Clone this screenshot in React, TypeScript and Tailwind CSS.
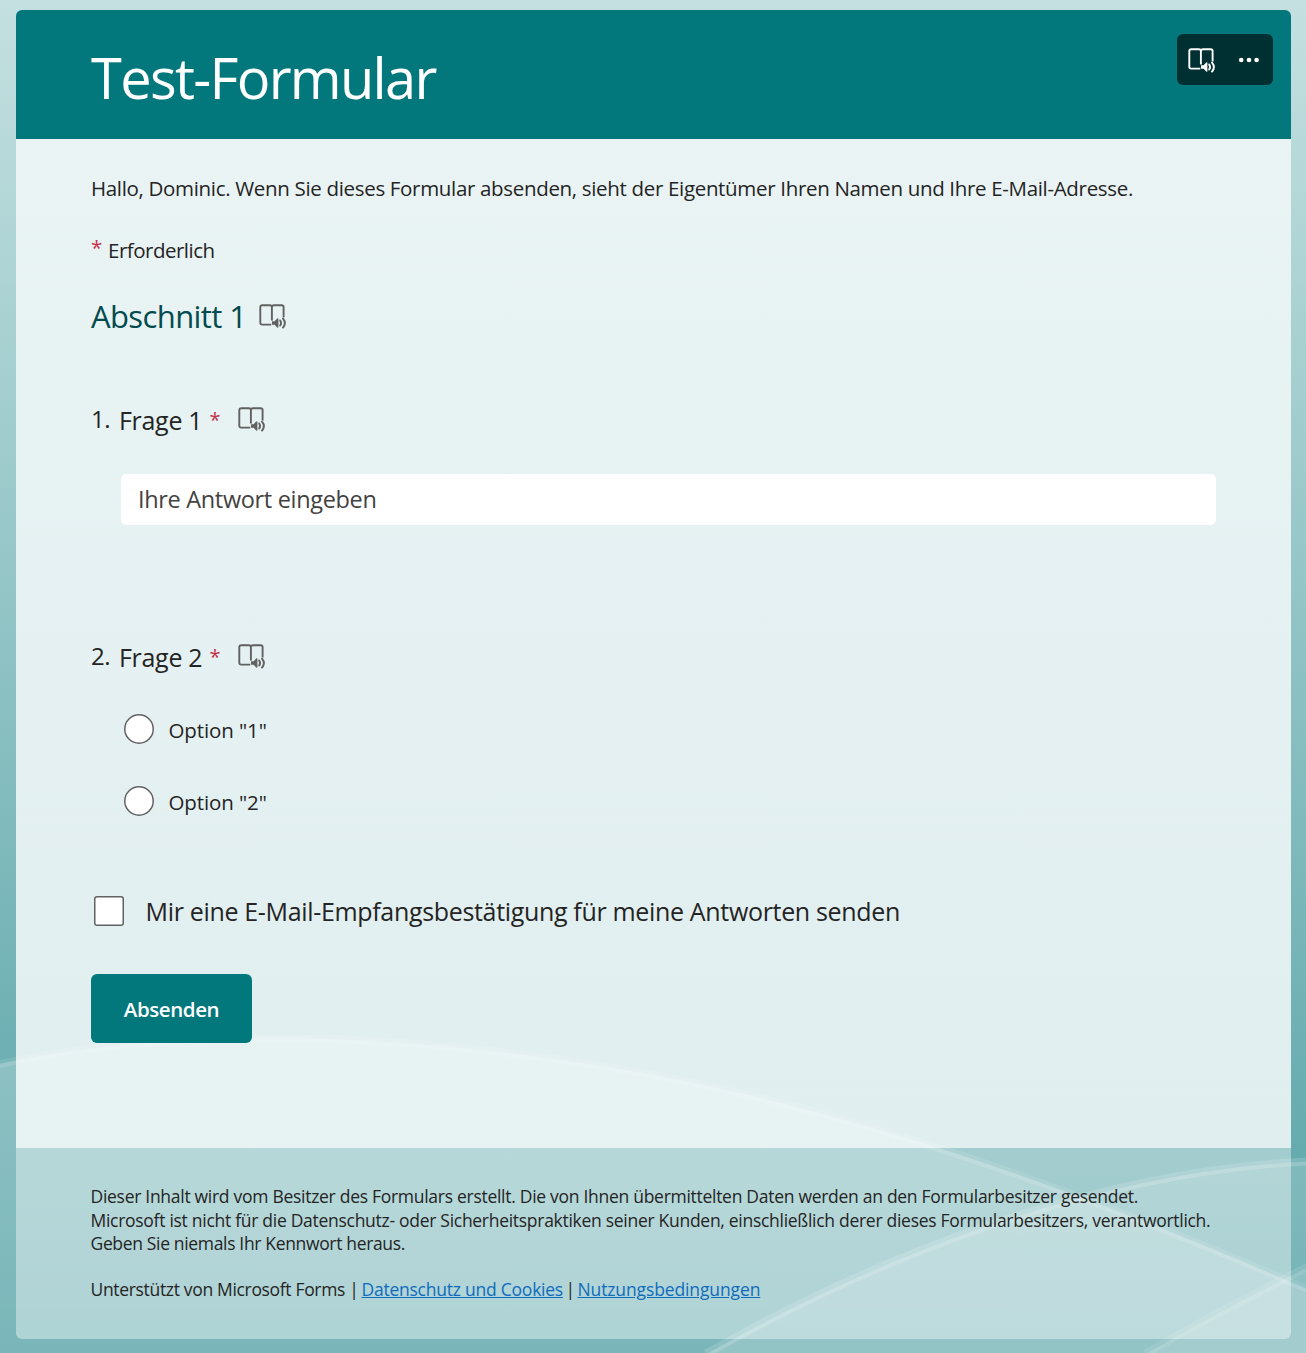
type IconProps = { className?: string; stroke?: number };

function ReaderIcon({ className = "", stroke = 1.9 }: IconProps) {
  return (
    <svg className={className} width="28" height="26" viewBox="0 0 28 26" fill="none" stroke="currentColor" strokeWidth={stroke}>
      <path d="M12.3 20.6H3.2Q1.3 20.6 1.3 18.7V3Q1.3 1.2 3.2 1.2H10.8Q12.9 1.2 12.9 3Q12.9 1.2 15 1.2H22.6Q24.6 1.2 24.6 3V13.4" />
      <path d="M12.9 3V16.6" />
      <path d="M13 17.2H15.6L18.2 14.6Q19.4 13.9 19.4 15.2V22.8Q19.4 24.1 18.2 23.4L15.6 20.8H13Z" fill="currentColor" stroke="none" />
      <path d="M21.2 16.4Q22.9 19 21.2 21.6" strokeLinecap="round" />
      <path d="M24 14.6Q27.8 19 24 23.6" strokeLinecap="round" />
    </svg>
  );
}

function Backdrop() {
  const arc1 = "M-10 1066C80 1046 170 1038 270 1038C400 1038 550 1054 680 1080C900 1125 1110 1203 1316 1293";
  const arc2 = "M706 1354C860 1266 1084 1170 1316 1161";
  const arc3 = "M1145 1354C1200 1322 1255 1293 1316 1263";
  return (
    <svg className="absolute inset-0 -z-10" width="1306" height="1353" viewBox="0 0 1306 1353" fill="none">
      <defs>
        <linearGradient id="sky" x1="0" y1="0" x2="0" y2="1">
          <stop offset="0" stopColor="#c4e0e0" />
          <stop offset="1" stopColor="#55a2a6" />
        </linearGradient>
      </defs>
      <path d="M0 0H1306V1353H0Z" fill="url(#sky)" />
      <g fill="#fff" fillOpacity=".22">
        <path d={arc1 + "V1353H-10Z"} />
        <path d={arc2 + "V1354Z"} fillOpacity=".18" />
        <path d={arc3 + "V1354Z"} fillOpacity=".15" />
      </g>
      <g stroke="#fff" strokeOpacity=".17">
        <path d={arc1} strokeWidth="4" transform="translate(0 2)" strokeOpacity=".13" />
        <path d={arc1} strokeWidth="4" transform="translate(0 -2)" strokeOpacity=".1" />
        <path d={arc2} strokeWidth="4" transform="translate(1 2)" />
        <path d={arc2} strokeWidth="4" transform="translate(-1 -2)" strokeOpacity=".15" />
        <path d={arc3} strokeWidth="4" transform="translate(1 2)" strokeOpacity=".1" />
        <path d={arc3} strokeWidth="4" transform="translate(-1 -2)" strokeOpacity=".1" />
      </g>
    </svg>
  );
}

function Question({ number, title, className }: { number: string; title: string; className: string }) {
  return (
    <div className={`flex h-8 items-center text-[25px]/8 ${className}`}>
      <span className="w-[28px] text-2xl/8 -tracking-[0.5px]">{number}</span>
      <span className="mt-px w-[90.5px] -tracking-[0.3px]">{title}</span>
      <span className="mt-0.5 w-7 text-[20px]/8 text-[#c4314b]">*</span>
      <ReaderIcon className="mt-0.5 text-[#616161]" />
    </div>
  );
}

function Option({ label, className }: { label: string; className: string }) {
  return (
    <label className={`flex h-10 items-center pl-[33px] text-[20.5px] -tracking-[0.1px] ${className}`}>
      <span className="-mt-0.5 mr-[14.5px] size-[30px] rounded-full bg-white shadow-[inset_0_0_0_1.5px_#616161]" />
      <span>{label}</span>
    </label>
  );
}

export default function App() {
  return (
    <div className="relative isolate h-[1353px] w-[1306px] overflow-hidden px-4 pt-2.5 font-['Open_Sans',sans-serif] whitespace-nowrap text-[#242424]">
      <Backdrop />
      <div className="w-[1275px] overflow-hidden rounded-[6px]">
        <header className="flex h-[129px] items-start justify-between bg-[#03787c] pt-6 pr-[18px] pl-[75px] text-white">
          <h1 className="mt-2.5 text-[56px]/[66px] -tracking-[1.7px]">Test-Formular</h1>
          <div className="flex h-[51px] w-24 items-center rounded-[6px] bg-[#003032] pl-[11px]">
            <ReaderIcon className="mt-0.5" />
            <svg className="ml-[22px]" width="22" height="6" viewBox="0 0 22 6" fill="currentColor">
              <circle cx="3.2" cy="3" r="2.3" />
              <circle cx="11" cy="3" r="2.3" />
              <circle cx="18.6" cy="3" r="2.3" />
            </svg>
          </div>
        </header>

        <main className="h-[1009px] bg-linear-to-b from-[#f6fafb]/80 to-white/80 pt-[34px] pr-[75px] pl-[75px]">
          <p className="text-[20.5px]/[30px] -tracking-[0.325px]">
            Hallo, Dominic. Wenn Sie dieses Formular absenden, sieht der Eigentümer Ihren Namen und Ihre E-Mail-Adresse.
          </p>
          <p className="mt-8 flex text-[20.5px]/[30px] -tracking-[0.5px]">
            <span className="-mt-[3px] w-[17px] text-[#c4314b]">*</span>Erforderlich
          </p>
          <h2 className="mt-[31px] flex h-10 items-center text-[31px]/10 -tracking-[0.6px] text-[#024b4e]">
            <span className="-mt-px w-[167.5px]">Abschnitt 1</span>
            <ReaderIcon className="mt-0.5 text-[#616161]" />
          </h2>

          <Question number="1." title="Frage 1" className="mt-[67px]" />
          <div className="mt-[39px] ml-[30px] flex h-[51px] items-center rounded-[5px] bg-white pt-px pl-[17px] text-[23.5px] -tracking-[0.33px] text-[#424242]">
            Ihre Antwort eingeben
          </div>

          <Question number="2." title="Frage 2" className="mt-[115px]" />
          <Option label={'Option "1"'} className="mt-[38px]" />
          <Option label={'Option "2"'} className="mt-8" />

          <label className="mt-[69px] flex h-10 items-center pl-[3px] text-[25px] -tracking-[0.33px]">
            <span className="mr-[21.5px] size-[30px] rounded-[3px] bg-white shadow-[inset_0_0_0_1.5px_#616161]" />
            <span className="mt-0.5">Mir eine E-Mail-Empfangsbestätigung für meine Antworten senden</span>
          </label>

          <button className="mt-[43px] block h-[69px] w-[161px] rounded-[6px] bg-[#03787c] pt-0.5 text-[20.5px] font-semibold -tracking-[0.42px] text-white">
            Absenden
          </button>
        </main>

        <footer className="h-[191px] bg-white/40 pt-[36.8px] pl-[74.5px] text-[17.5px]/[23.7px] -tracking-[0.285px]">
          <p>
            Dieser Inhalt wird vom Besitzer des Formulars erstellt. Die von Ihnen übermittelten Daten werden an den Formularbesitzer gesendet.
          </p>
          <p>
            Microsoft ist nicht für die Datenschutz- oder Sicherheitspraktiken seiner Kunden, einschließlich derer dieses Formularbesitzers, verantwortlich.
          </p>
          <p className="-tracking-[0.34px]">Geben Sie niemals Ihr Kennwort heraus.</p>
          <p className="mt-[22.5px] flex">
            <span className="w-[271px] -tracking-[0.33px]">Unterstützt von Microsoft Forms |</span>
            <a className="w-[201.5px] -tracking-[0.24px] text-[#0f6cbd] underline">Datenschutz und Cookies</a>
            <span className="w-[14.5px] text-center">|</span>
            <a className="-tracking-[0.12px] text-[#0f6cbd] underline">Nutzungsbedingungen</a>
          </p>
        </footer>
      </div>
    </div>
  );
}
